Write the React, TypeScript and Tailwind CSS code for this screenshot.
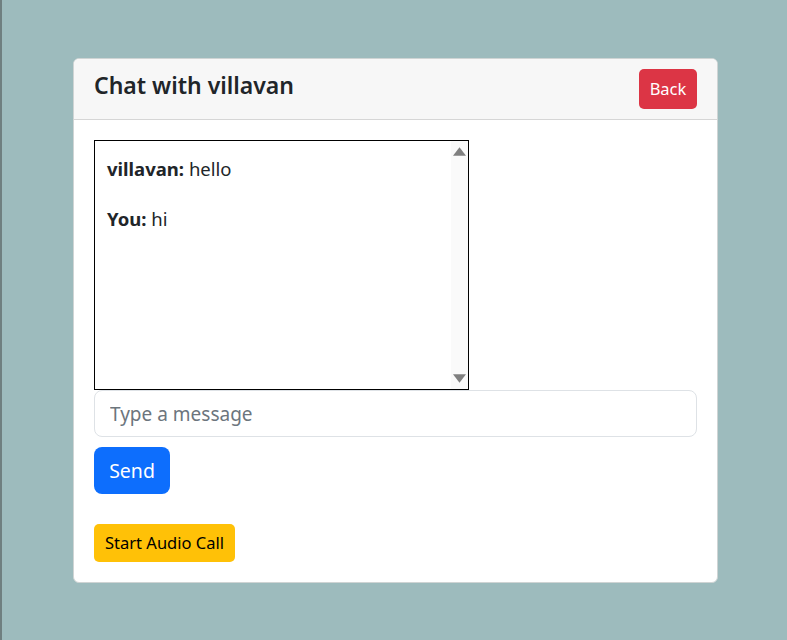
import React from "react";

export default function App() {
  return (
    <div
      className="min-h-[640px] w-full bg-[#9dbbbd] border-l-2 border-[#6f7f80] pt-[58px]"
      style={{ fontFamily: '"Noto Sans", "Open Sans", sans-serif' }}
    >
      <div className="ml-[71px] w-[645px] rounded-[6px] border border-[#cfd4d4] bg-white overflow-hidden text-[#212529]">
        <div className="flex h-[61px] items-center justify-between border-b border-[#d6d6d6] bg-[#f7f7f7] pl-[20px] pr-[20px]">
          <h2 className="text-[23px] font-semibold leading-none -mt-[7px]">Chat with villavan</h2>
          <button className="h-[40px] w-[58px] rounded-[5px] bg-[#dc3545] text-[16.5px] text-white">Back</button>
        </div>
        <div className="px-[20px] pt-[20px] pb-[20px]">
          <div className="flex h-[250px] w-[375px] border border-black">
            <div className="flex-1 px-[12px] pt-[15px] text-[18.5px]">
              <p className="mb-[24px] leading-[26px]">
                <span className="font-bold">villavan:</span> hello
              </p>
              <p className="leading-[26px]">
                <span className="font-bold">You:</span> hi
              </p>
            </div>
            <div className="flex w-[17px] flex-col items-center justify-between bg-[#fafafa] py-[6px]">
              <svg width="13" height="9" viewBox="0 0 12 8">
                <path d="M6 0 L12 8 L0 8 Z" fill="#808080" />
              </svg>
              <svg width="13" height="9" viewBox="0 0 12 8">
                <path d="M0 0 L12 0 L6 8 Z" fill="#808080" />
              </svg>
            </div>
          </div>
          <input
            className="block h-[47px] w-full rounded-[8px] border border-[#dee2e6] px-[15px] text-[19px] outline-none placeholder:text-[#6c757d]"
            placeholder="Type a message"
          />
          <button className="mt-[10px] h-[47px] w-[76px] rounded-[8px] bg-[#0d6efd] text-[19.5px] text-white">Send</button>
          <div className="mt-[30px]">
            <button className="h-[38px] w-[141px] rounded-[5px] bg-[#ffc107] text-[16.5px] text-black">Start Audio Call</button>
          </div>
        </div>
      </div>
    </div>
  );
}
